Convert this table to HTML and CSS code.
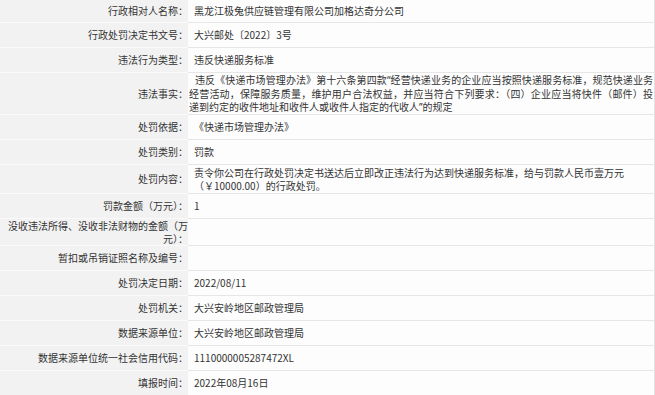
FILE: index.html
```html
<!DOCTYPE html>
<html lang="zh-CN">
<head>
<meta charset="utf-8">
<title>行政处罚信息</title>
<link rel="stylesheet" href="styles.css">
</head>
<body>
<table class="info">
  <colgroup><col class="col-label"><col></colgroup>
  <tbody>
    <tr class="first"><th>行政相对人名称：</th><td>黑龙江极兔供应链管理有限公司加格达奇分公司</td></tr>
    <tr><th>行政处罚决定书文号：</th><td>大兴邮处〔2022〕3号</td></tr>
    <tr><th>违法行为类型：</th><td>违反快递服务标准</td></tr>
    <tr><th>违法事实：</th><td class="long">违反《快递市场管理办法》第十六条第四款<span class="q">“</span>经营快递业务的企业应当按照快递服务标准，规范快递业务经营活动，保障服务质量，维护用户合法权益，并应当符合下列要求：（四）企业应当将快件（邮件）投递到约定的收件地址和收件人或收件人指定的代收人<span class="q">”</span>的规定</td></tr>
    <tr><th>处罚依据：</th><td>《快递市场管理办法》</td></tr>
    <tr><th>处罚类别：</th><td>罚款</td></tr>
    <tr class="two"><th>处罚内容：</th><td>责令你公司在行政处罚决定书送达后立即改正违法行为达到快递服务标准，给与罚款人民币壹万元（￥10000.00）的行政处罚。</td></tr>
    <tr><th>罚款金额（万元）：</th><td>1</td></tr>
    <tr><th>没收违法所得、没收非法财物的金额（万元）：</th><td></td></tr>
    <tr><th>暂扣或吊销证照名称及编号：</th><td></td></tr>
    <tr><th>处罚决定日期：</th><td>2022/08/11</td></tr>
    <tr><th>处罚机关：</th><td>大兴安岭地区邮政管理局</td></tr>
    <tr><th>数据来源单位：</th><td>大兴安岭地区邮政管理局</td></tr>
    <tr><th>数据来源单位统一社会信用代码：</th><td>1110000005287472XL</td></tr>
    <tr><th>填报时间：</th><td>2022年08月16日</td></tr>
  </tbody>
</table>
</body>
</html>
```
FILE: styles.css
```css
html, body {
  margin: 0;
  padding: 0;
  background: #ffffff;
}
body {
  font-family: "Noto Sans CJK SC", "Microsoft YaHei", sans-serif;
  font-size: 10px;
  color: #333333;
}
.info {
  width: 655px;
  border-collapse: collapse;
  table-layout: fixed;
}
.col-label {
  width: 188px;
}
.info th,
.info td {
  height: 25px;
  padding: 0;
  line-height: 13px;
  vertical-align: middle;
  box-sizing: border-box;
}
.info th {
  font-weight: normal;
  text-align: right;
  background: #f2f2f2;
  border-bottom: 1px solid #fafafa;
  padding-right: 0;
  padding-left: 0;
}
.info td {
  text-align: left;
  background: #fdfdfd;
  border-bottom: 1px solid #e6e6e6;
  border-right: 1px solid #e2e2e2;
  padding-left: 6px;
  padding-right: 1px;
}
.info .first th,
.info .first td {
  height: 22px;
}
.info .two td {
  padding-top: 1px;
  padding-bottom: 1px;
}
.info td.long {
  padding-left: 1px;
  text-indent: 6px;
  text-align: justify;
}
.q {
  font-family: "Noto Sans", "DejaVu Sans", sans-serif;
}
```
